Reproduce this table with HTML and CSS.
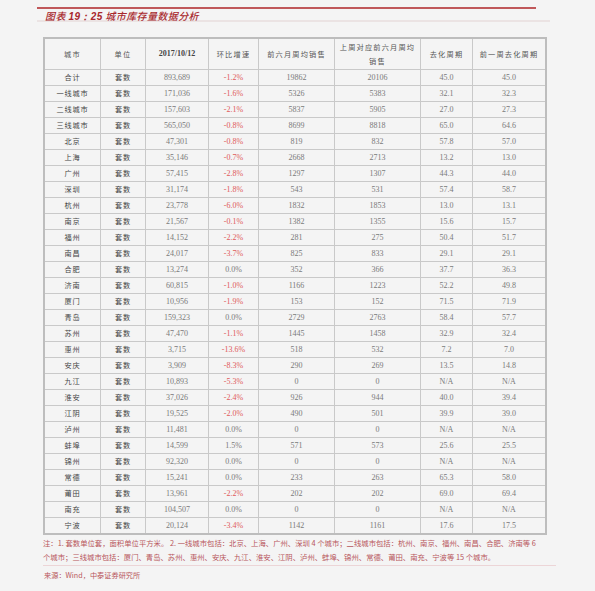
FILE: index.html
```html
<!DOCTYPE html>
<html lang="zh">
<head>
<meta charset="utf-8">
<link rel="stylesheet" href="styles.css">
</head>
<body>
<div class="page">
  <div class="title-bar">
    <div class="title"><span class="t-cn">图表</span> <span class="t-num">19：25</span> <span class="t-cn">城市库存量数据分析</span></div>
  </div>
  <table class="data">
    <colgroup>
      <col class="c1"><col class="c2"><col class="c3"><col class="c4"><col class="c5"><col class="c6"><col class="c7"><col class="c8">
    </colgroup>
    <thead>
      <tr>
        <th>城市</th><th>单位</th><th class="num">2017/10/12</th><th>环比增速</th><th>前六月周均销售</th><th>上周对应前六月周均<br>销售</th><th>去化周期</th><th>前一周去化周期</th>
      </tr>
    </thead>
    <tbody>
      <tr><td class="cn">合计</td><td class="cn">套数</td><td>893,689</td><td class="neg">-1.2%</td><td>19862</td><td>20106</td><td>45.0</td><td>45.0</td></tr>
      <tr><td class="cn">一线城市</td><td class="cn">套数</td><td>171,036</td><td class="neg">-1.6%</td><td>5326</td><td>5383</td><td>32.1</td><td>32.3</td></tr>
      <tr><td class="cn">二线城市</td><td class="cn">套数</td><td>157,603</td><td class="neg">-2.1%</td><td>5837</td><td>5905</td><td>27.0</td><td>27.3</td></tr>
      <tr><td class="cn">三线城市</td><td class="cn">套数</td><td>565,050</td><td class="neg">-0.8%</td><td>8699</td><td>8818</td><td>65.0</td><td>64.6</td></tr>
      <tr><td class="cn">北京</td><td class="cn">套数</td><td>47,301</td><td class="neg">-0.8%</td><td>819</td><td>832</td><td>57.8</td><td>57.0</td></tr>
      <tr><td class="cn">上海</td><td class="cn">套数</td><td>35,146</td><td class="neg">-0.7%</td><td>2668</td><td>2713</td><td>13.2</td><td>13.0</td></tr>
      <tr><td class="cn">广州</td><td class="cn">套数</td><td>57,415</td><td class="neg">-2.8%</td><td>1297</td><td>1307</td><td>44.3</td><td>44.0</td></tr>
      <tr><td class="cn">深圳</td><td class="cn">套数</td><td>31,174</td><td class="neg">-1.8%</td><td>543</td><td>531</td><td>57.4</td><td>58.7</td></tr>
      <tr><td class="cn">杭州</td><td class="cn">套数</td><td>23,778</td><td class="neg">-6.0%</td><td>1832</td><td>1853</td><td>13.0</td><td>13.1</td></tr>
      <tr><td class="cn">南京</td><td class="cn">套数</td><td>21,567</td><td class="neg">-0.1%</td><td>1382</td><td>1355</td><td>15.6</td><td>15.7</td></tr>
      <tr><td class="cn">福州</td><td class="cn">套数</td><td>14,152</td><td class="neg">-2.2%</td><td>281</td><td>275</td><td>50.4</td><td>51.7</td></tr>
      <tr><td class="cn">南昌</td><td class="cn">套数</td><td>24,017</td><td class="neg">-3.7%</td><td>825</td><td>833</td><td>29.1</td><td>29.1</td></tr>
      <tr><td class="cn">合肥</td><td class="cn">套数</td><td>13,274</td><td>0.0%</td><td>352</td><td>366</td><td>37.7</td><td>36.3</td></tr>
      <tr><td class="cn">济南</td><td class="cn">套数</td><td>60,815</td><td class="neg">-1.0%</td><td>1166</td><td>1223</td><td>52.2</td><td>49.8</td></tr>
      <tr><td class="cn">厦门</td><td class="cn">套数</td><td>10,956</td><td class="neg">-1.9%</td><td>153</td><td>152</td><td>71.5</td><td>71.9</td></tr>
      <tr><td class="cn">青岛</td><td class="cn">套数</td><td>159,323</td><td>0.0%</td><td>2729</td><td>2763</td><td>58.4</td><td>57.7</td></tr>
      <tr><td class="cn">苏州</td><td class="cn">套数</td><td>47,470</td><td class="neg">-1.1%</td><td>1445</td><td>1458</td><td>32.9</td><td>32.4</td></tr>
      <tr><td class="cn">惠州</td><td class="cn">套数</td><td>3,715</td><td class="neg">-13.6%</td><td>518</td><td>532</td><td>7.2</td><td>7.0</td></tr>
      <tr><td class="cn">安庆</td><td class="cn">套数</td><td>3,909</td><td class="neg">-8.3%</td><td>290</td><td>269</td><td>13.5</td><td>14.8</td></tr>
      <tr><td class="cn">九江</td><td class="cn">套数</td><td>10,893</td><td class="neg">-5.3%</td><td>0</td><td>0</td><td>N/A</td><td>N/A</td></tr>
      <tr><td class="cn">淮安</td><td class="cn">套数</td><td>37,026</td><td class="neg">-2.4%</td><td>926</td><td>944</td><td>40.0</td><td>39.4</td></tr>
      <tr><td class="cn">江阴</td><td class="cn">套数</td><td>19,525</td><td class="neg">-2.0%</td><td>490</td><td>501</td><td>39.9</td><td>39.0</td></tr>
      <tr><td class="cn">泸州</td><td class="cn">套数</td><td>11,481</td><td>0.0%</td><td>0</td><td>0</td><td>N/A</td><td>N/A</td></tr>
      <tr><td class="cn">蚌埠</td><td class="cn">套数</td><td>14,599</td><td>1.5%</td><td>571</td><td>573</td><td>25.6</td><td>25.5</td></tr>
      <tr><td class="cn">锦州</td><td class="cn">套数</td><td>92,320</td><td>0.0%</td><td>0</td><td>0</td><td>N/A</td><td>N/A</td></tr>
      <tr><td class="cn">常德</td><td class="cn">套数</td><td>15,241</td><td>0.0%</td><td>233</td><td>263</td><td>65.3</td><td>58.0</td></tr>
      <tr><td class="cn">莆田</td><td class="cn">套数</td><td>13,961</td><td class="neg">-2.2%</td><td>202</td><td>202</td><td>69.0</td><td>69.4</td></tr>
      <tr><td class="cn">南充</td><td class="cn">套数</td><td>104,507</td><td>0.0%</td><td>0</td><td>0</td><td>N/A</td><td>N/A</td></tr>
      <tr><td class="cn">宁波</td><td class="cn">套数</td><td>20,124</td><td class="neg">-3.4%</td><td>1142</td><td>1161</td><td>17.6</td><td>17.5</td></tr>
    </tbody>
  </table>
  <div class="notes">
    <p class="note">注：1. 套数单位套，面积单位平方米。 2. 一线城市包括：北京、上海、广州、深圳 4 个城市；二线城市包括：杭州、南京、福州、南昌、合肥、济南等 6</p>
    <p class="note">个城市；三线城市包括：厦门、青岛、苏州、惠州、安庆、九江、淮安、江阴、泸州、蚌埠、锦州、常德、莆田、南充、宁波等 15 个城市。</p>
  </div>
  <p class="source">来源：Wind，中泰证券研究所</p>
</div>
</body>
</html>
```

FILE: styles.css
```css
html, body {
  margin: 0;
  padding: 0;
  background: #f4f4f4;
}

.page {
  width: 595px;
  height: 591px;
  padding: 7px 45px 0 37px;
  box-sizing: border-box;
  font-family: "Noto Sans CJK SC", sans-serif;
}

.title-bar {
  width: 499px;
  border-top: 2px solid #c0585a;
}

.title {
  width: 513px;
  height: 13px;
  padding-left: 8px;
  box-sizing: border-box;
  border-bottom: 2px solid #ebe3e3;
  font-style: italic;
  color: #a8282c;
  font-size: 10px;
  letter-spacing: 0.4px;
  line-height: 13px;
  white-space: nowrap;
}

.t-num {
  font-family: "Liberation Sans", sans-serif;
  font-weight: bold;
}

.t-cn {
  font-weight: 500;
}

.data {
  margin: 15px 0 0 6px;
  width: 502px;
  table-layout: fixed;
  border-collapse: separate;
  border-spacing: 0;
  border: 2px solid #bdbdbd;
}

.c1 { width: 56px; }
.c2 { width: 45px; }
.c3 { width: 63px; }
.c4 { width: 50px; }
.c5 { width: 76px; }
.c6 { width: 86px; }
.c7 { width: 52px; }
.c8 { width: 72px; }

.data th, .data td {
  border-right: 1px solid #c9c9c9;
  border-bottom: 1px solid #c9c9c9;
  text-align: center;
  white-space: nowrap;
}

.data th:last-child, .data td:last-child {
  border-right: none;
}

.data tbody tr:last-child td {
  border-bottom: none;
}

.data th {
  padding: 1px 0;
  font-size: 7.2px;
  font-weight: normal;
  color: #555;
  line-height: 14px;
  letter-spacing: 1.2px;
}

.data th.num {
  font-family: "Liberation Serif", serif;
  font-weight: bold;
  font-size: 8px;
  letter-spacing: 0;
  color: #444;
}

.data td {
  padding: 0;
  font-family: "Liberation Serif", serif;
  font-size: 8px;
  line-height: 15px;
  color: #7a7a7a;
}

.data td.cn {
  font-family: "Noto Sans CJK SC", sans-serif;
  font-size: 7.2px;
  letter-spacing: 0.8px;
  color: #444;
}

.data td.neg {
  color: #e05a5a;
}

.notes {
  margin: 1px 0 0 6px;
  width: 513px;
  border-bottom: 1px solid #ecd5d7;
  padding-bottom: 1px;
}

.note {
  margin: 0;
  font-size: 7.35px;
  line-height: 14px;
  color: #b8565c;
  white-space: nowrap;
}

.source {
  margin: 2px 0 0 7px;
  font-size: 7.2px;
  line-height: 14px;
  color: #b8565c;
}
```
